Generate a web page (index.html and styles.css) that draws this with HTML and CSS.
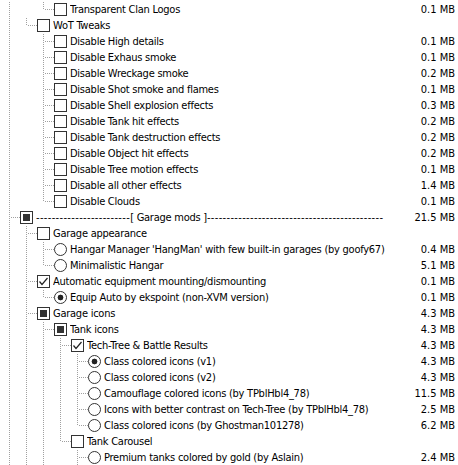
FILE: index.html
```html
<!DOCTYPE html>
<html lang="en">
<head>
  <meta charset="UTF-8">
  <title>Select Components</title>
  <link rel="stylesheet" href="styles.css">
</head>
<body>

<div class="list">
  <div class="row"><span class="c v"></span><span class="c"></span><span class="c l"></span><span class="chk"></span><span class="lbl">Transparent Clan Logos</span><span class="size">0.1 MB</span></div>
  <div class="row"><span class="c v"></span><span class="c l"></span><span class="chk"></span><span class="lbl">WoT Tweaks</span><span class="size"></span></div>
  <div class="row"><span class="c v"></span><span class="c"></span><span class="c t"></span><span class="chk"></span><span class="lbl">Disable High details</span><span class="size">0.1 MB</span></div>
  <div class="row"><span class="c v"></span><span class="c"></span><span class="c t"></span><span class="chk"></span><span class="lbl">Disable Exhaus smoke</span><span class="size">0.1 MB</span></div>
  <div class="row"><span class="c v"></span><span class="c"></span><span class="c t"></span><span class="chk"></span><span class="lbl">Disable Wreckage smoke</span><span class="size">0.2 MB</span></div>
  <div class="row"><span class="c v"></span><span class="c"></span><span class="c t"></span><span class="chk"></span><span class="lbl">Disable Shot smoke and flames</span><span class="size">0.1 MB</span></div>
  <div class="row"><span class="c v"></span><span class="c"></span><span class="c t"></span><span class="chk"></span><span class="lbl">Disable Shell explosion effects</span><span class="size">0.3 MB</span></div>
  <div class="row"><span class="c v"></span><span class="c"></span><span class="c t"></span><span class="chk"></span><span class="lbl">Disable Tank hit effects</span><span class="size">0.2 MB</span></div>
  <div class="row"><span class="c v"></span><span class="c"></span><span class="c t"></span><span class="chk"></span><span class="lbl">Disable Tank destruction effects</span><span class="size">0.2 MB</span></div>
  <div class="row"><span class="c v"></span><span class="c"></span><span class="c t"></span><span class="chk"></span><span class="lbl">Disable Object hit effects</span><span class="size">0.2 MB</span></div>
  <div class="row"><span class="c v"></span><span class="c"></span><span class="c t"></span><span class="chk"></span><span class="lbl">Disable Tree motion effects</span><span class="size">0.1 MB</span></div>
  <div class="row"><span class="c v"></span><span class="c"></span><span class="c t"></span><span class="chk"></span><span class="lbl">Disable all other effects</span><span class="size">1.4 MB</span></div>
  <div class="row"><span class="c v"></span><span class="c"></span><span class="c l"></span><span class="chk"></span><span class="lbl">Disable Clouds</span><span class="size">0.1 MB</span></div>

  <div class="row"><span class="c t"></span><span class="chk part"></span><span class="lbl"><span class="dash">------------------------</span>[ Garage mods ]<span class="dash">---------------------------------------------</span></span><span class="size">21.5 MB</span></div>
  <div class="row"><span class="c v"></span><span class="c t"></span><span class="chk"></span><span class="lbl">Garage appearance</span><span class="size"></span></div>
  <div class="row"><span class="c v"></span><span class="c v"></span><span class="c t"></span><span class="rad"></span><span class="lbl">Hangar Manager 'HangMan' with few built-in garages (by goofy67)</span><span class="size">0.4 MB</span></div>
  <div class="row"><span class="c v"></span><span class="c v"></span><span class="c l"></span><span class="rad"></span><span class="lbl">Minimalistic Hangar</span><span class="size">5.1 MB</span></div>
  <div class="row"><span class="c v"></span><span class="c t"></span><span class="chk"><svg viewBox="0 0 11 11" width="11" height="11"><polyline points="1.5,5.5 4,8.5 9.5,2" fill="none" stroke="#222" stroke-width="1.2"/></svg></span><span class="lbl">Automatic equipment mounting/dismounting</span><span class="size">0.1 MB</span></div>
  <div class="row"><span class="c v"></span><span class="c v"></span><span class="c l"></span><span class="rad on"></span><span class="lbl">Equip Auto by ekspoint (non-XVM version)</span><span class="size">0.1 MB</span></div>
  <div class="row"><span class="c v"></span><span class="c t"></span><span class="chk part"></span><span class="lbl">Garage icons</span><span class="size">4.3 MB</span></div>
  <div class="row"><span class="c v"></span><span class="c v"></span><span class="c t"></span><span class="chk part"></span><span class="lbl">Tank icons</span><span class="size">4.3 MB</span></div>
  <div class="row"><span class="c v"></span><span class="c v"></span><span class="c v"></span><span class="c t"></span><span class="chk"><svg viewBox="0 0 11 11" width="11" height="11"><polyline points="1.5,5.5 4,8.5 9.5,2" fill="none" stroke="#222" stroke-width="1.2"/></svg></span><span class="lbl">Tech-Tree &amp; Battle Results</span><span class="size">4.3 MB</span></div>
  <div class="row"><span class="c v"></span><span class="c v"></span><span class="c v"></span><span class="c v"></span><span class="c t"></span><span class="rad on"></span><span class="lbl">Class colored icons (v1)</span><span class="size">4.3 MB</span></div>
  <div class="row"><span class="c v"></span><span class="c v"></span><span class="c v"></span><span class="c v"></span><span class="c t"></span><span class="rad"></span><span class="lbl">Class colored icons (v2)</span><span class="size">4.3 MB</span></div>
  <div class="row"><span class="c v"></span><span class="c v"></span><span class="c v"></span><span class="c v"></span><span class="c t"></span><span class="rad"></span><span class="lbl">Camouflage colored icons (by TPblHbl4_78)</span><span class="size">11.5 MB</span></div>
  <div class="row"><span class="c v"></span><span class="c v"></span><span class="c v"></span><span class="c v"></span><span class="c t"></span><span class="rad"></span><span class="lbl">Icons with better contrast on Tech-Tree (by TPblHbl4_78)</span><span class="size">2.5 MB</span></div>
  <div class="row"><span class="c v"></span><span class="c v"></span><span class="c v"></span><span class="c v"></span><span class="c l"></span><span class="rad"></span><span class="lbl">Class colored icons (by Ghostman101278)</span><span class="size">6.2 MB</span></div>
  <div class="row"><span class="c v"></span><span class="c v"></span><span class="c v"></span><span class="c l"></span><span class="chk"></span><span class="lbl">Tank Carousel</span><span class="size"></span></div>
  <div class="row"><span class="c v"></span><span class="c v"></span><span class="c v"></span><span class="c"></span><span class="c t"></span><span class="rad"></span><span class="lbl">Premium tanks colored by gold (by Aslain)</span><span class="size">2.4 MB</span></div>
</div>

</body>
</html>
```

FILE: styles.css
```css
body {
  margin: 0;
  background: #fff;
  color: #000;
  font-family: "DejaVu Sans Condensed", "DejaVu Sans", sans-serif;
  font-size: 11px;
  overflow: hidden;
}

.list {
  padding-top: 2px;
}

.row {
  display: flex;
  align-items: flex-start;
  height: 16px;
  line-height: 16px;
  padding: 0 3px;
}

/* tree indent cells, 17px per level, dotted line sits 6px in */
.c {
  flex: none;
  width: 17px;
  height: 16px;
}

.v {
  background: repeating-linear-gradient(#a0a0a0 0 1px, transparent 1px 2px) 6px 0 / 1px 16px no-repeat;
}

.t {
  background:
    repeating-linear-gradient(90deg, #a0a0a0 0 1px, transparent 1px 2px) 8px 7px / 9px 1px no-repeat,
    repeating-linear-gradient(#a0a0a0 0 1px, transparent 1px 2px) 6px 0 / 1px 16px no-repeat;
}

.l {
  background:
    repeating-linear-gradient(90deg, #a0a0a0 0 1px, transparent 1px 2px) 8px 7px / 9px 1px no-repeat,
    repeating-linear-gradient(#a0a0a0 0 1px, transparent 1px 2px) 6px 0 / 1px 8px no-repeat;
}

.chk {
  flex: none;
  box-sizing: border-box;
  width: 13px;
  height: 13px;
  margin-top: 1px;
  border: 1px solid #333;
  background: #fff;
}

.chk svg {
  display: block;
}

.chk.part {
  padding: 2px;
  background: #333;
  background-clip: content-box;
}

.rad {
  flex: none;
  box-sizing: border-box;
  width: 13px;
  height: 13px;
  margin-top: 1px;
  border: 1px solid #333;
  border-radius: 50%;
  background: #fff;
}

.rad.on {
  background: radial-gradient(circle, #222 0 2.6px, #fff 3.2px);
}

.lbl {
  flex: 1;
  margin-left: 3px;
  letter-spacing: -0.25px;
  white-space: nowrap;
  overflow: hidden;
}

/* separator dashes are a touch wider than the label text */
.dash {
  letter-spacing: 0.35px;
}

.size {
  flex: none;
  white-space: nowrap;
  text-align: right;
}
```
